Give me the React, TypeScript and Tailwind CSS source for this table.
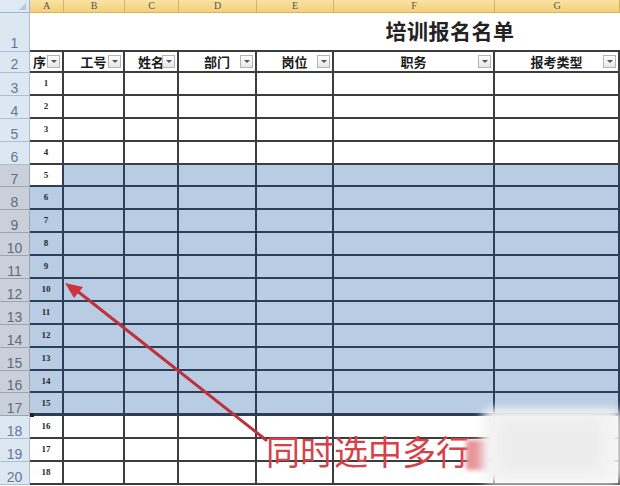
import React from "react";

const grid = "grid grid-cols-[30px_34px_61px_54px_78px_77px_161px_125px]";
const letters = ["A", "B", "C", "D", "E", "F", "G"];
const heads = ["序", "工号", "姓名", "部门", "岗位", "职务", "报考类型"];

function FilterBtn() {
  return (
    <span className="absolute right-[2px] top-[3px] w-[13px] h-[13px] border border-[#b4b4b4] bg-gradient-to-b from-white to-[#e6e6e6] flex items-center justify-center">
      <span className="w-0 h-0 border-l-[3px] border-r-[3px] border-t-[3px] border-l-transparent border-r-transparent border-t-[#555]" />
    </span>
  );
}

export default function App() {
  const rows = Array.from({ length: 18 }, (_, i) => i + 3);

  return (
    <div className="relative w-[620px] h-[486px] overflow-hidden bg-white font-['Noto_Sans_CJK_SC',sans-serif]">
      {/* column headers */}
      <div className={`${grid} h-[13px]`}>
        <div className="relative bg-[#dfe8f3] border-r border-b border-[#9fb5cc]">
          <span className="absolute right-[3px] bottom-[2px] w-0 h-0 border-l-[7px] border-t-[7px] border-l-transparent border-t-transparent border-b-0 border-r-0" />
          <span className="absolute right-[3px] bottom-[2px] w-[7px] h-[7px] bg-[#b9c6d4] [clip-path:polygon(100%_0,100%_100%,0_100%)]" />
        </div>
        {letters.map((l) => (
          <div
            key={l}
            className="bg-gradient-to-b from-[#fae3a4] to-[#f4cf78] border-r border-b border-[#d9b35c] flex items-center justify-center text-[10px] leading-none text-[#555] font-['Liberation_Serif',serif]"
          >
            {l}
          </div>
        ))}
      </div>

      {/* row 1: title */}
      <div className={`${grid} h-[39px]`}>
        <div className="bg-[#dde7f2] border-r border-b border-[#a9bfd6] flex items-end justify-center pb-[1px] text-[14px] leading-none text-[#60789a] font-['Liberation_Sans',sans-serif]">
          1
        </div>
        <div className="col-span-7 border-b-2 border-[#3d3d3d] flex items-center justify-center pl-[250px] pb-[2px]">
          <span className="text-[21px] font-bold tracking-[0.5px] text-[#222]">培训报名名单</span>
        </div>
      </div>

      {/* row 2: headers */}
      <div className={`${grid} h-[21px]`}>
        <div className="bg-[#dde7f2] border-r border-b border-[#a9bfd6] flex items-end justify-center pb-[1px] text-[14px] leading-none text-[#60789a] font-['Liberation_Sans',sans-serif]">
          2
        </div>
        {heads.map((h, i) => (
          <div
            key={h}
            className={`relative border-r-2 border-b-2 border-[#3d3d3d] flex items-center ${i === 0 ? "justify-start pl-[3px]" : "justify-center"}`}
          >
            <span className="text-[13px] font-bold leading-none text-[#1a1a1a]">{h}</span>
            <FilterBtn />
          </div>
        ))}
      </div>

      {/* data rows */}
      {rows.map((r) => {
        const sel = r >= 7 && r <= 17;
        const active = r === 7;
        return (
          <div key={r} className={`${grid} h-[22.9px]`}>
            <div
              className={`flex items-end justify-center pb-[0px] text-[14px] leading-none font-['Liberation_Sans',sans-serif] border-r border-b ${
                sel
                  ? "bg-[#c9d0d9] text-[#5f6c7b] border-[#9aa6b4]"
                  : "bg-[#dde7f2] text-[#60789a] border-[#a9bfd6]"
              }`}
            >
              {r}
            </div>
            {letters.map((l, i) => (
              <div
                key={l}
                className={`border-r-2 border-b-2 flex items-center justify-center ${
                  sel ? "border-[#2e3d58]" : "border-[#3d3d3d]"
                } ${sel && !(active && i === 0) ? "bg-[#b8cce4]" : "bg-white"} ${
                  r === 17 ? "border-b-[3px]" : ""
                }`}
              >
                {i === 0 && (
                  <span className="text-[9px] font-bold leading-none text-[#2a2a2a] font-['Liberation_Serif',serif]">
                    {r - 2}
                  </span>
                )}
              </div>
            ))}
          </div>
        );
      })}

      {/* selection handle */}
      <div className="absolute left-[30px] top-[413px] w-[4px] h-[4px] bg-[#222]" />

      {/* red arrow */}
      <svg className="absolute left-0 top-0 pointer-events-none" width="620" height="486">
        <g style={{ filter: "blur(0.6px)" }}>
          <line x1="76" y1="290" x2="266" y2="440" stroke="#c0303a" strokeWidth="3" strokeLinecap="round" />
          <polygon points="65,283 74,298 83,287" fill="#d0333d" />
        </g>
      </svg>

      {/* annotation text */}
      <div className="absolute left-[266px] top-[433px] text-[34px] leading-[36px] text-[#d7424a] whitespace-nowrap">
        同时选中多行
      </div>

      {/* blurred watermark */}
      <div className="absolute left-[466px] top-[440px] w-[24px] h-[30px] bg-[#e8959a] blur-[2px]" />
      <div className="absolute left-[482px] top-[408px] w-[140px] h-[76px] rounded-[10px] bg-[#f4f4f4] blur-[5px]" />
      <div className="absolute left-[500px] top-[420px] w-[100px] h-[50px] bg-[#ececec] blur-[6px]" />
    </div>
  );
}
